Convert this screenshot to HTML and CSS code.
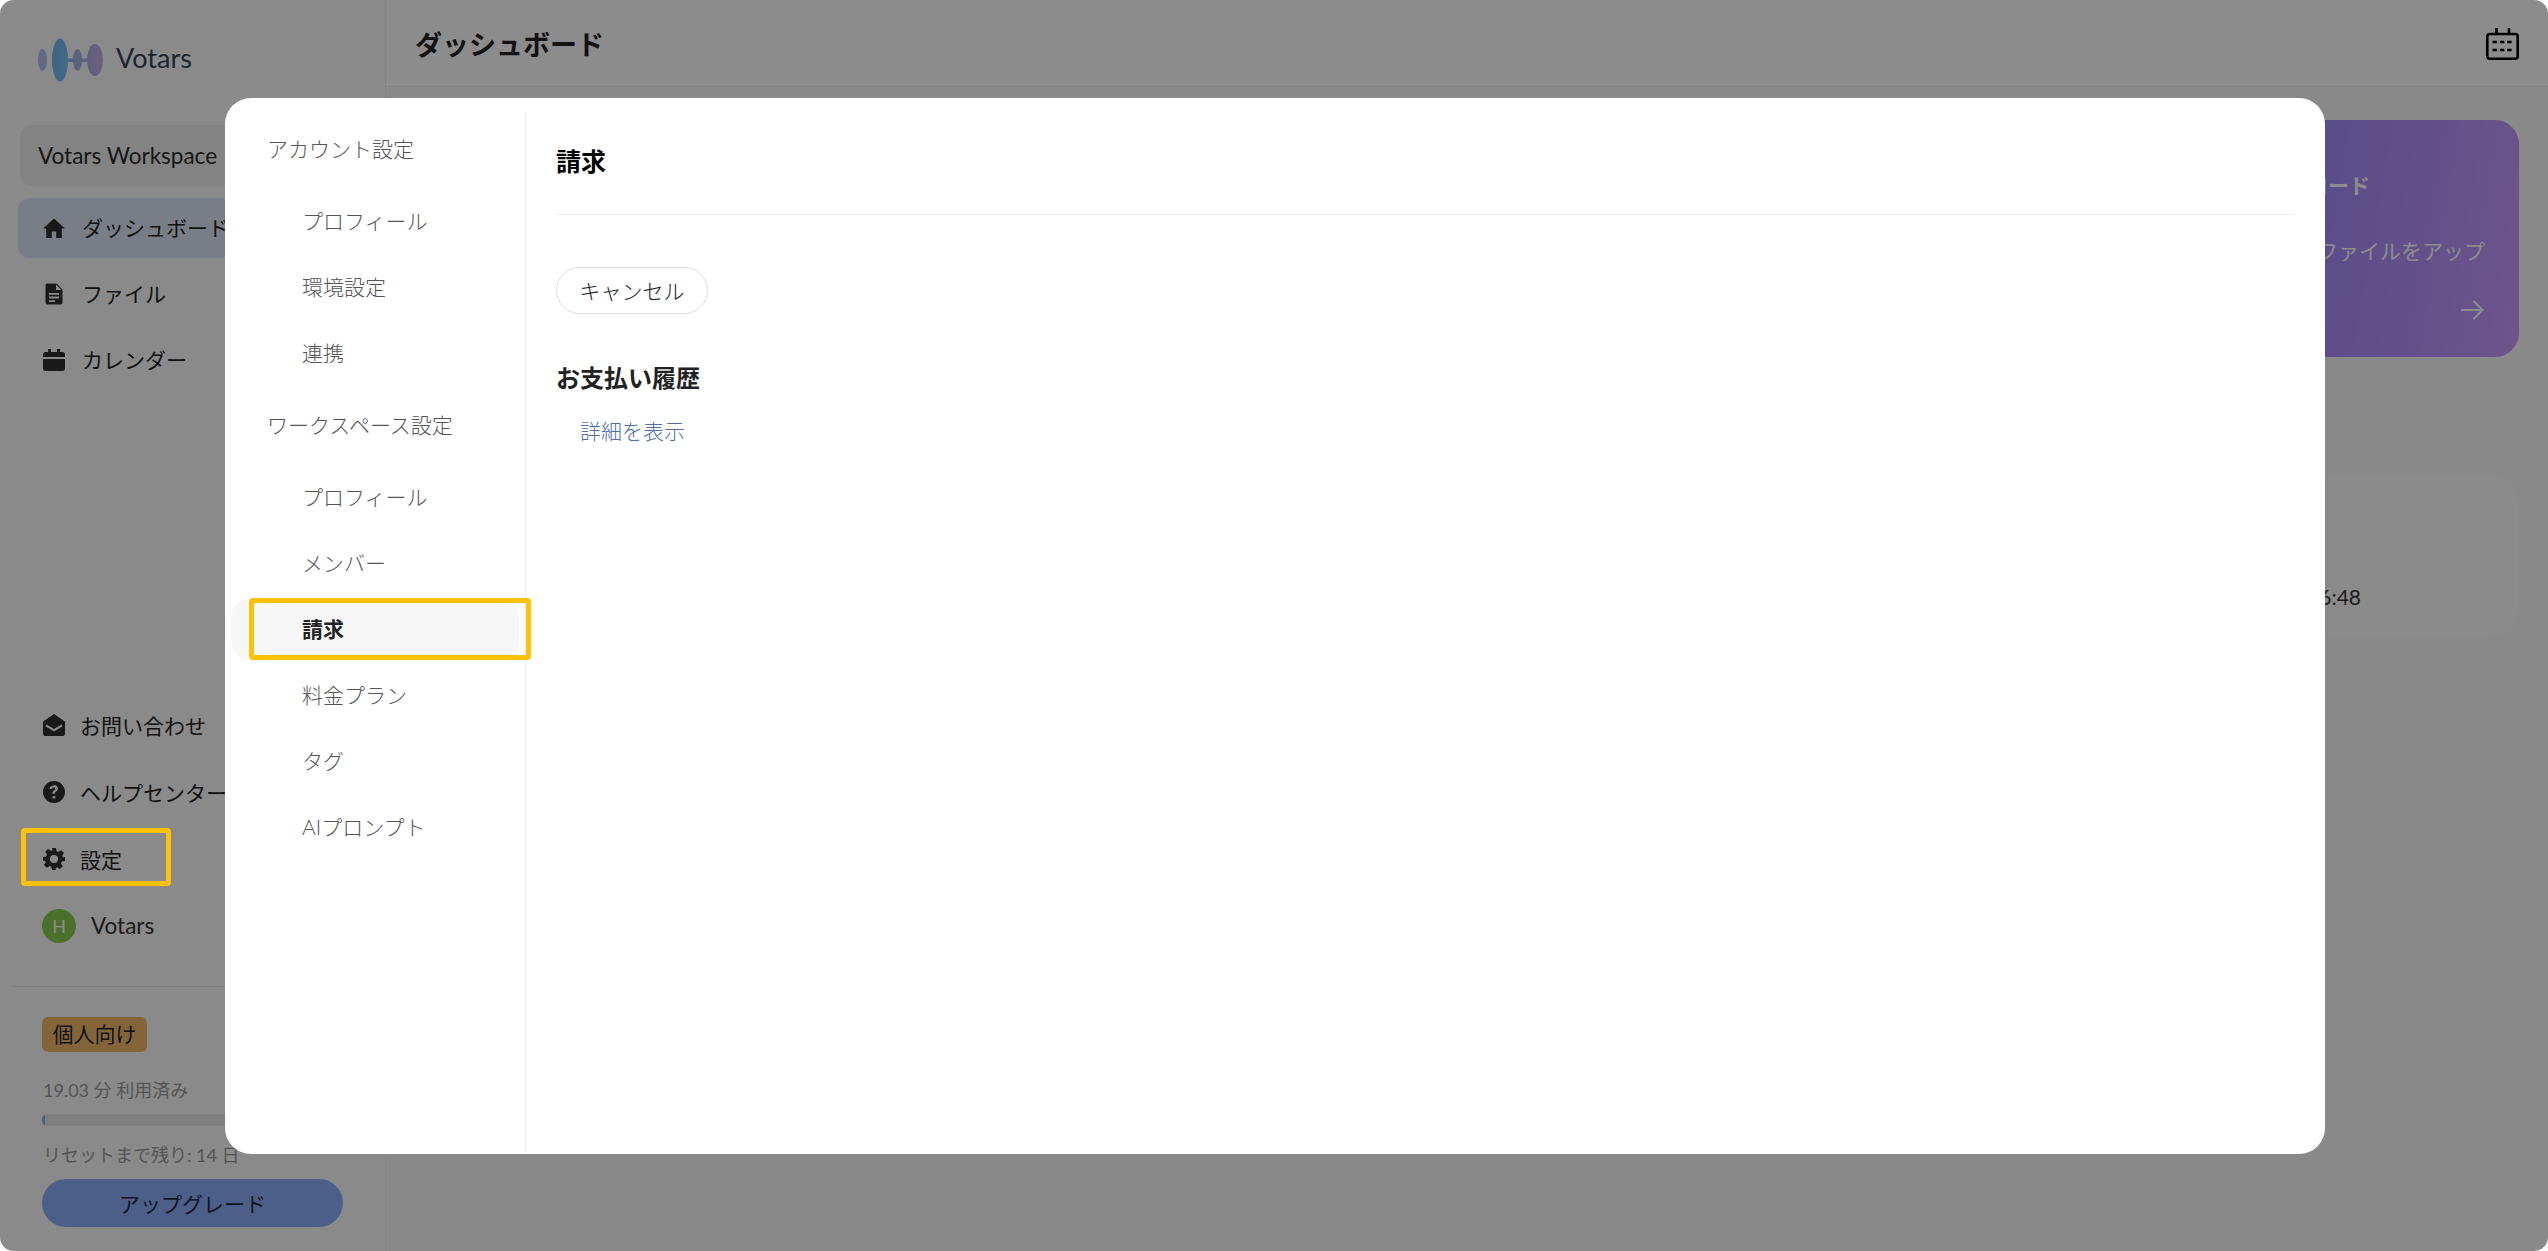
FILE: index.html
```html
<!DOCTYPE html>
<html lang="ja">
<head>
    <meta charset="UTF-8">
    <title>Votars</title>
    <link rel="stylesheet" href="styles.css">
</head>
<body>

    <div class="app">
        <!-- サイドバー -->
        <aside class="sidebar">
            <div class="logo">
                <svg class="logo-mark" width="66" height="44" viewBox="0 0 66 44">
                    <defs>
                        <linearGradient id="logoBig" x1="0" y1="0" x2="1" y2="1">
                            <stop offset="0" stop-color="#6fb4ea"/>
                            <stop offset="1" stop-color="#7ac4f8"/>
                        </linearGradient>
                        <linearGradient id="logoLine" x1="0" y1="0" x2="1" y2="0">
                            <stop offset="0" stop-color="#7ab4f0"/>
                            <stop offset="1" stop-color="#c4acec"/>
                        </linearGradient>
                        <linearGradient id="logoRight" x1="0" y1="0" x2="1" y2="0">
                            <stop offset="0" stop-color="#a8aeea"/>
                            <stop offset="1" stop-color="#ccaee8"/>
                        </linearGradient>
                    </defs>
                    <ellipse cx="4.500" cy="22" rx="4.500" ry="11" fill="#b4bff0"/>
                    <rect x="22" y="20.500" width="30" height="3.500" fill="url(#logoLine)"/>
                    <ellipse cx="22" cy="22" rx="8" ry="21.500" fill="url(#logoBig)"/>
                    <ellipse cx="39.500" cy="22" rx="4.500" ry="11" fill="#9db4e6"/>
                    <ellipse cx="57" cy="22" rx="8" ry="16" fill="url(#logoRight)"/>
                </svg>
                <span class="logo-text">Votars</span>
            </div>

            <div class="workspace">Votars Workspace</div>

            <nav class="nav-main">
                <a class="nav-item is-active">
                    <svg class="nav-icon" viewBox="0 0 24 24"><path d="M12 2.500 1 12.500h3.200V22h5.600v-6.500h4.400V22h5.600v-9.500H23z"/></svg>
                    <span>ダッシュボード</span>
                </a>
                <a class="nav-item">
                    <svg class="nav-icon" viewBox="0 0 24 24"><path fill-rule="evenodd" d="M5.500 1.500h9l6 6v13a2 2 0 0 1-2 2h-13a2 2 0 0 1-2-2v-17a2 2 0 0 1 2-2zM14 2.500V8h5.500zM7 11v1.800h10V11zm0 3.600v1.800h10v-1.800zm0 3.600V20h6v-1.800z"/></svg>
                    <span>ファイル</span>
                </a>
                <a class="nav-item">
                    <svg class="nav-icon" viewBox="0 0 24 24"><path d="M6 1h3v3h6V1h3v3h2.500A2.500 2.500 0 0 1 23 6.500V9H1V6.500A2.500 2.500 0 0 1 3.500 4H6zM1 11h22v9.500a2.500 2.500 0 0 1-2.500 2.500h-17A2.500 2.500 0 0 1 1 20.500z"/></svg>
                    <span>カレンダー</span>
                </a>
            </nav>

            <nav class="nav-bottom">
                <a class="nav-item">
                    <svg class="nav-icon" viewBox="0 0 24 24"><path fill-rule="evenodd" d="M12 1 1 8.500V21a2 2 0 0 0 2 2h18a2 2 0 0 0 2-2V8.500zM4.500 11.500 12 16l7.500-4.500 1 1.800L12 18.500l-8.500-5.200z"/></svg>
                    <span>お問い合わせ</span>
                </a>
                <a class="nav-item">
                    <svg class="nav-icon" viewBox="0 0 24 24"><path fill-rule="evenodd" d="M12 1a11 11 0 1 1 0 22 11 11 0 0 1 0-22zm-.2 4.500c-2.500 0-4 1.400-4.200 3.500h2.500c.1-.9.700-1.400 1.600-1.400s1.500.5 1.500 1.200c0 .7-.4 1.100-1.200 1.700-1.100.8-1.700 1.500-1.600 3.200h2.400c0-1 .3-1.400 1.200-2 1.100-.8 1.900-1.700 1.900-3.100 0-2.100-1.700-3.600-4.100-3.600zM10.600 16v2.500h2.700V16z"/></svg>
                    <span>ヘルプセンター</span>
                </a>
                <a class="nav-item">
                    <svg class="nav-icon" viewBox="0 0 24 24"><path fill-rule="evenodd" d="M10 1h4l.6 3.200 1.800.8 2.800-1.800 2.800 2.800-1.800 2.800.8 1.800L23 10v4l-3.200.6-.8 1.800 1.800 2.800-2.800 2.800-2.800-1.800-1.800.8L14 23h-4l-.6-3.200-1.800-.8-2.800 1.800-2.800-2.800 1.800-2.800-.8-1.800L1 14v-4l3.200-.6.800-1.800-1.800-2.800 2.800-2.800 2.800 1.800 1.800-.8zM12 8a4 4 0 1 0 0 8 4 4 0 0 0 0-8z"/></svg>
                    <span>設定</span>
                </a>
                <a class="nav-item nav-user">
                    <span class="avatar">H</span>
                    <span class="user-name">Votars</span>
                </a>
            </nav>

            <div class="plan">
                <span class="plan-badge">個人向け</span>
                <div class="plan-usage">19.03 分 利用済み</div>
                <div class="plan-bar"><div class="plan-bar-fill"></div></div>
                <div class="plan-reset">リセットまで残り: 14 日</div>
                <button class="plan-upgrade">アップグレード</button>
            </div>
        </aside>

        <!-- メイン -->
        <main class="main">
            <header class="main-header">
                <h1>ダッシュボード</h1>
                <svg class="header-cal" width="33" height="33" viewBox="0 0 33 33" fill="none" stroke="#000" stroke-width="2.600">
                    <rect x="1.300" y="7" width="30.400" height="24.700" rx="2.500"/>
                    <path d="M10.500 1v6M23 1v6"/>
                    <path d="M6.500 15h20M6.500 23h20" stroke-dasharray="4.500 2.800"/>
                </svg>
            </header>
            <div class="main-body">
                <div class="card-row">
                    <div class="upload-card">
                        <div class="upload-title">アップロード</div>
                        <div class="upload-desc">音声のファイルをアップ</div>
                        <svg class="upload-arrow" width="23" height="20" viewBox="0 0 23 20" fill="none" stroke="#fff" stroke-width="2">
                            <path d="M0 10h21M12.500 1l9 9-9 9"/>
                        </svg>
                    </div>
                </div>
                <div class="recent-card">
                    <span class="recent-time">2025-05-20 16:48</span>
                </div>
            </div>
        </main>
    </div>

    <!-- 設定モーダル -->
    <div class="overlay">
        <div class="modal">
            <div class="modal-side">
                <div class="side-group">アカウント設定</div>
                <a class="side-link">プロフィール</a>
                <a class="side-link">環境設定</a>
                <a class="side-link">連携</a>
                <div class="side-group">ワークスペース設定</div>
                <a class="side-link">プロフィール</a>
                <a class="side-link">メンバー</a>
                <a class="side-link is-current">請求<span class="mark mark-billing"></span></a>
                <a class="side-link">料金プラン</a>
                <a class="side-link">タグ</a>
                <a class="side-link">AIプロンプト</a>
            </div>
            <div class="modal-content">
                <h2 class="content-title">請求</h2>
                <button class="btn-cancel">キャンセル</button>
                <h3 class="content-sub">お支払い履歴</h3>
                <a class="content-link">詳細を表示</a>
            </div>
        </div>
        <span class="mark mark-settings"></span>
    </div>

</body>
</html>
```

FILE: styles.css
```css
/* General */
* {
    box-sizing: border-box;
}

html, body {
    height: 100%;
}

body {
    margin: 0;
    background-color: #fff;
    color: #222;
    font-family: Lato, "Noto Sans CJK JP", sans-serif;
    font-size: 21px;
    overflow: hidden;
}

.app {
    display: flex;
    height: 100vh;
    background-color: #fdfdfd;
}

/* Sidebar */
.sidebar {
    width: 386px;
    flex-shrink: 0;
    display: flex;
    flex-direction: column;
    border-right: 1px solid #eee;
    background-color: #fcfcfc;
}

.logo {
    display: flex;
    align-items: center;
    gap: 12px;
    height: 44px;
    margin: 38px 0 0 38px;
}

.logo-text {
    padding-bottom: 5px;
    font-size: 27px;
    color: #39445e;
}

.workspace {
    margin: 43px 0 0 20px;
    height: 61px;
    line-height: 61px;
    padding-left: 18px;
    background-color: #efefef;
    border-radius: 12px;
    color: #2a2a2a;
    font-size: 22.5px;
    white-space: nowrap;
}

.nav-main {
    margin-top: 12px;
}

.nav-item {
    display: flex;
    align-items: center;
    height: 60px;
    margin-left: 18px;
    padding-left: 24px;
    gap: 16px;
    border-radius: 12px;
    color: #222;
}

.nav-main .nav-item {
    margin-bottom: 6px;
}

.nav-main .nav-item span {
    padding-bottom: 2px;
}

.nav-item.is-active {
    background-color: #dde5f5;
}

.nav-icon {
    width: 24px;
    height: 24px;
    fill: #2e2e2e;
    flex-shrink: 0;
}

.nav-bottom {
    margin-top: auto;
}

.nav-bottom .nav-item {
    height: 67px;
    gap: 14px;
}

.nav-bottom .nav-user {
    gap: 15px;
}

.avatar {
    width: 34px;
    height: 34px;
    border-radius: 50%;
    background-color: #88cc4c;
    color: #fff;
    font-size: 18px;
    text-align: center;
    line-height: 34px;
}

.user-name {
    color: #333;
    font-size: 22.5px;
}

.plan {
    margin: 27px 0 0 12px;
    padding: 30px 42px 24px 30px;
    border-top: 1px solid #e8e8e8;
}

.plan-badge {
    display: block;
    width: 105px;
    height: 35px;
    line-height: 34px;
    text-align: center;
    background-color: #f0b968;
    border-radius: 6px;
    font-size: 21px;
}

.plan-usage,
.plan-reset {
    padding-left: 1px;
    color: #9a9a9a;
    font-size: 18px;
    line-height: 24px;
    white-space: nowrap;
}

.plan-usage {
    margin-top: 26px;
}

.plan-bar {
    height: 12px;
    margin-top: 12px;
    border-radius: 6px;
    background-color: #e6e6e6;
    overflow: hidden;
}

.plan-bar-fill {
    width: 3px;
    height: 100%;
    background-color: #8ea8e0;
}

.plan-reset {
    margin-top: 17px;
}

.plan-upgrade {
    display: block;
    width: 301px;
    height: 48px;
    margin-top: 12px;
    border: none;
    border-radius: 24px;
    background-color: #8aaef8;
    color: #1d2a44;
    font-family: inherit;
    font-size: 21px;
}

/* Main area */
.main {
    flex: 1;
    display: flex;
    flex-direction: column;
    background-color: #fafafa;
}

.main-header {
    height: 87px;
    display: flex;
    align-items: center;
    justify-content: space-between;
    padding: 0 29px;
    border-bottom: 1px solid #eee;
    background-color: #fff;
}

.main-header h1 {
    margin: 0;
    font-size: 27px;
    font-weight: 700;
    color: #222;
}

.main-body {
    padding: 33px 29px 0;
}

.card-row {
    display: flex;
    justify-content: flex-end;
}

.upload-card {
    width: 310px;
    height: 237px;
    padding: 49px 35px 0 35px;
    border-radius: 24px;
    background: linear-gradient(100deg, #8e86f8, #c89aff);
    color: #fff;
}

.upload-title {
    font-weight: 700;
    line-height: 32px;
}

.upload-desc {
    margin-top: 34px;
    padding-left: 10px;
    line-height: 32px;
    white-space: nowrap;
}

.upload-arrow {
    display: block;
    margin: 33px 0 0 auto;
}

.recent-card {
    height: 165px;
    margin-top: 116px;
    padding: 110px 157px 0 0;
    text-align: right;
    border-radius: 24px;
    background-color: #fbfbfb;
    border: 1px solid #f8f8f8;
}

.recent-time {
    color: #333;
}

/* Modal */
.overlay {
    position: fixed;
    top: 0;
    left: 0;
    width: 100vw;
    height: 100vh;
    padding-left: 2px;
    display: flex;
    justify-content: center;
    align-items: center;
    background-color: rgba(0, 0, 0, 0.45);
    border-radius: 14px;
}

.modal {
    width: 2100px;
    height: 1056px;
    display: flex;
    background-color: #fff;
    border-radius: 26px;
}

.modal-side {
    width: 301px;
    flex-shrink: 0;
    margin-top: 15px;
    padding: 0 6px;
    border-right: 1px solid #eee;
    display: flex;
    flex-direction: column;
}

.side-group {
    height: 72px;
    margin-bottom: 6px;
    padding-left: 36px;
    line-height: 72px;
    color: #555;
    font-weight: 300;
}

.side-link {
    position: relative;
    height: 60px;
    margin-bottom: 6px;
    padding-left: 71px;
    line-height: 60px;
    color: #555;
    font-weight: 300;
    border-radius: 18px;
}

.side-link.is-current {
    background-color: #f7f7f7;
    color: #222;
    font-weight: 700;
}

.modal-content {
    flex: 1;
    padding: 0 30px;
}

.content-title {
    height: 117px;
    margin: 0;
    line-height: 127px;
    font-size: 25px;
    font-weight: 700;
    color: #000;
    border-bottom: 1px solid #eee;
}

.btn-cancel {
    display: block;
    height: 47px;
    width: 152px;
    margin-top: 52px;
    background-color: #fff;
    border: 1px solid #ddd;
    border-radius: 24px;
    color: #222;
    font-family: inherit;
    font-size: 21px;
    font-weight: 300;
}

.content-sub {
    margin: 47px 0 0;
    font-size: 24px;
    font-weight: 700;
    line-height: 34px;
    color: #222;
}

.content-link {
    display: block;
    margin: 21px 0 0 24px;
    color: #4f6fa8;
    font-weight: 300;
    line-height: 30px;
}

/* Yellow guide boxes */
.mark {
    position: absolute;
    border: 5px solid #ffc107;
    border-radius: 4px;
}

.mark-billing {
    top: -1px;
    left: 18px;
    width: 282px;
    height: 62px;
}

.mark-settings {
    top: 828px;
    left: 21px;
    width: 150px;
    height: 58px;
}
```
